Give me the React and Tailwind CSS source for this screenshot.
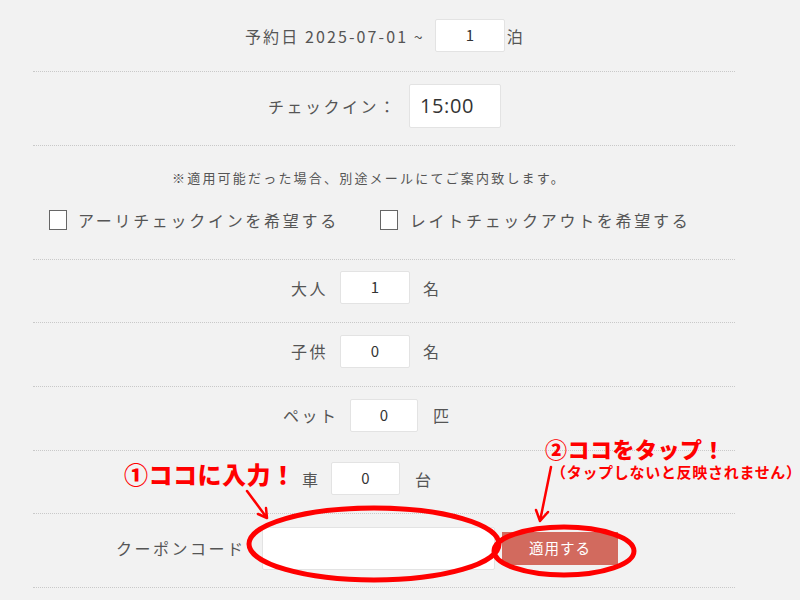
const jp = { fontFamily: '"Noto Sans CJK JP", "Noto Sans", sans-serif' };

function NumBox({ value, w = 'w-[70px]' }) {
  return (
    <div className={`${w} h-[33px] bg-white border border-[#e3e3e3] rounded-[2px] flex items-center justify-center text-[15px] text-[#333]`}>
      {value}
    </div>
  );
}

function CountRow({ label, value, unit, pl, labelW, boxW, unitGap, height }) {
  return (
    <div className={`${height} flex items-center pb-[7px] border-b border-dotted border-[#c9c9c9] ${pl}`}>
      <span className={`${labelW} text-[16px] tracking-[2.5px] text-[#555]`}>{label}</span>
      <NumBox value={value} w={boxW} />
      <span className={`${unitGap} text-[16px] text-[#555]`}>{unit}</span>
    </div>
  );
}

export default function App() {
  return (
    <div className="relative w-full h-[600px] overflow-hidden bg-[#f2f2f2]" style={jp}>
      <div className="ml-[33px] w-[702px]">
        {/* 予約日 */}
        <div className="h-[72px] flex items-center pl-[212px] border-b border-dotted border-[#c9c9c9]">
          <span className="text-[16px] tracking-[2.1px] text-[#555]">予約日 2025-07-01 ~</span>
          <div className="ml-[10px]">
            <NumBox value="1" w="w-[70px]" />
          </div>
          <span className="ml-[2px] text-[16px] text-[#555]">泊</span>
        </div>

        {/* チェックイン */}
        <div className="h-[74px] flex items-center pl-[235px] pb-[5px] border-b border-dotted border-[#c9c9c9]">
          <span className="w-[141px] text-[16px] tracking-[2.5px] text-[#555]">チェックイン：</span>
          <div
            className="w-[92px] h-[44px] bg-white border border-[#e3e3e3] rounded-[2px] flex items-center pl-[10px] text-[20px] tracking-[0.6px] text-[#333]"
            style={{ fontFamily: '"Open Sans", sans-serif' }}
          >
            15:00
          </div>
        </div>

        {/* 注意 + チェックボックス */}
        <div className="h-[114px] flex flex-col pt-[22px] border-b border-dotted border-[#c9c9c9]">
          <p className="pl-[139px] h-[20px] leading-[20px] text-[13px] tracking-[2.2px] text-[#555]">
            ※適用可能だった場合、別途メールにてご案内致します。
          </p>
          <div className="mt-[20px] h-[24px] flex items-center pl-[16px]">
            <label className="flex items-center">
              <span className="w-[18px] h-[20px] bg-white border border-[#666]"></span>
              <span className="ml-[11px] text-[16px] tracking-[2.7px] text-[#555]">アーリチェックインを希望する</span>
            </label>
            <label className="flex items-center ml-[41px]">
              <span className="w-[18px] h-[20px] bg-white border border-[#666]"></span>
              <span className="ml-[12px] text-[16px] tracking-[2.7px] text-[#555]">レイトチェックアウトを希望する</span>
            </label>
          </div>
        </div>

        <CountRow label="大人" value="1" unit="名" pl="pl-[258px]" labelW="w-[49px]" boxW="w-[70px]" unitGap="ml-[13px]" height="h-[63px]" />
        <CountRow label="子供" value="0" unit="名" pl="pl-[258px]" labelW="w-[49px]" boxW="w-[70px]" unitGap="ml-[13px]" height="h-[64px]" />
        <CountRow label="ペット" value="0" unit="匹" pl="pl-[250px]" labelW="w-[67px]" boxW="w-[68px]" unitGap="ml-[15px]" height="h-[64px]" />
        <CountRow label="車" value="0" unit="台" pl="pl-[269px]" labelW="w-[29px]" boxW="w-[69px]" unitGap="ml-[15px]" height="h-[63px]" />

        {/* クーポン */}
        <div className="h-[74px] flex items-center pl-[83px] pb-[5px] border-b border-dotted border-[#c9c9c9]">
          <span className="w-[146px] text-[16px] tracking-[2.5px] text-[#555]">クーポンコード</span>
          <div className="w-[233px] h-[43px] bg-white border border-[#e3e3e3] rounded-[2px]"></div>
          <button className="ml-[7px] w-[116px] h-[33px] bg-[#d26a5e] text-white text-[14.5px] tracking-[1px]">
            適用する
          </button>
        </div>
      </div>

      {/* 注釈 */}
      <div className="absolute left-[124px] top-[462px] text-[24px] leading-none font-black text-[#f00] tracking-[0.5px]">
        ①ココに入力！
      </div>
      <div className="absolute left-[545px] top-[437px] text-[22px] leading-none font-black text-[#f00] tracking-[0.5px]">
        ②ココをタップ！
      </div>
      <div className="absolute left-[551px] top-[464px] text-[15px] leading-none font-bold text-[#f00] tracking-[0.7px] whitespace-nowrap">
        （タップしないと反映されません）
      </div>
      <svg className="absolute left-0 top-0 pointer-events-none" width="800" height="600" viewBox="0 0 800 600">
        <g stroke="#f00" fill="none" strokeLinecap="round" strokeLinejoin="round">
          <ellipse cx="374" cy="544" rx="125" ry="36" strokeWidth="5" />
          <ellipse cx="564" cy="551" rx="70" ry="24" strokeWidth="5" />
          <path d="M247 491 L267 518 M258 514 L267 518 L266 508" strokeWidth="2.5" />
          <path d="M551 467 L540 521 M536 510 L540 521 L548 512" strokeWidth="2.5" />
        </g>
      </svg>
    </div>
  );
}
